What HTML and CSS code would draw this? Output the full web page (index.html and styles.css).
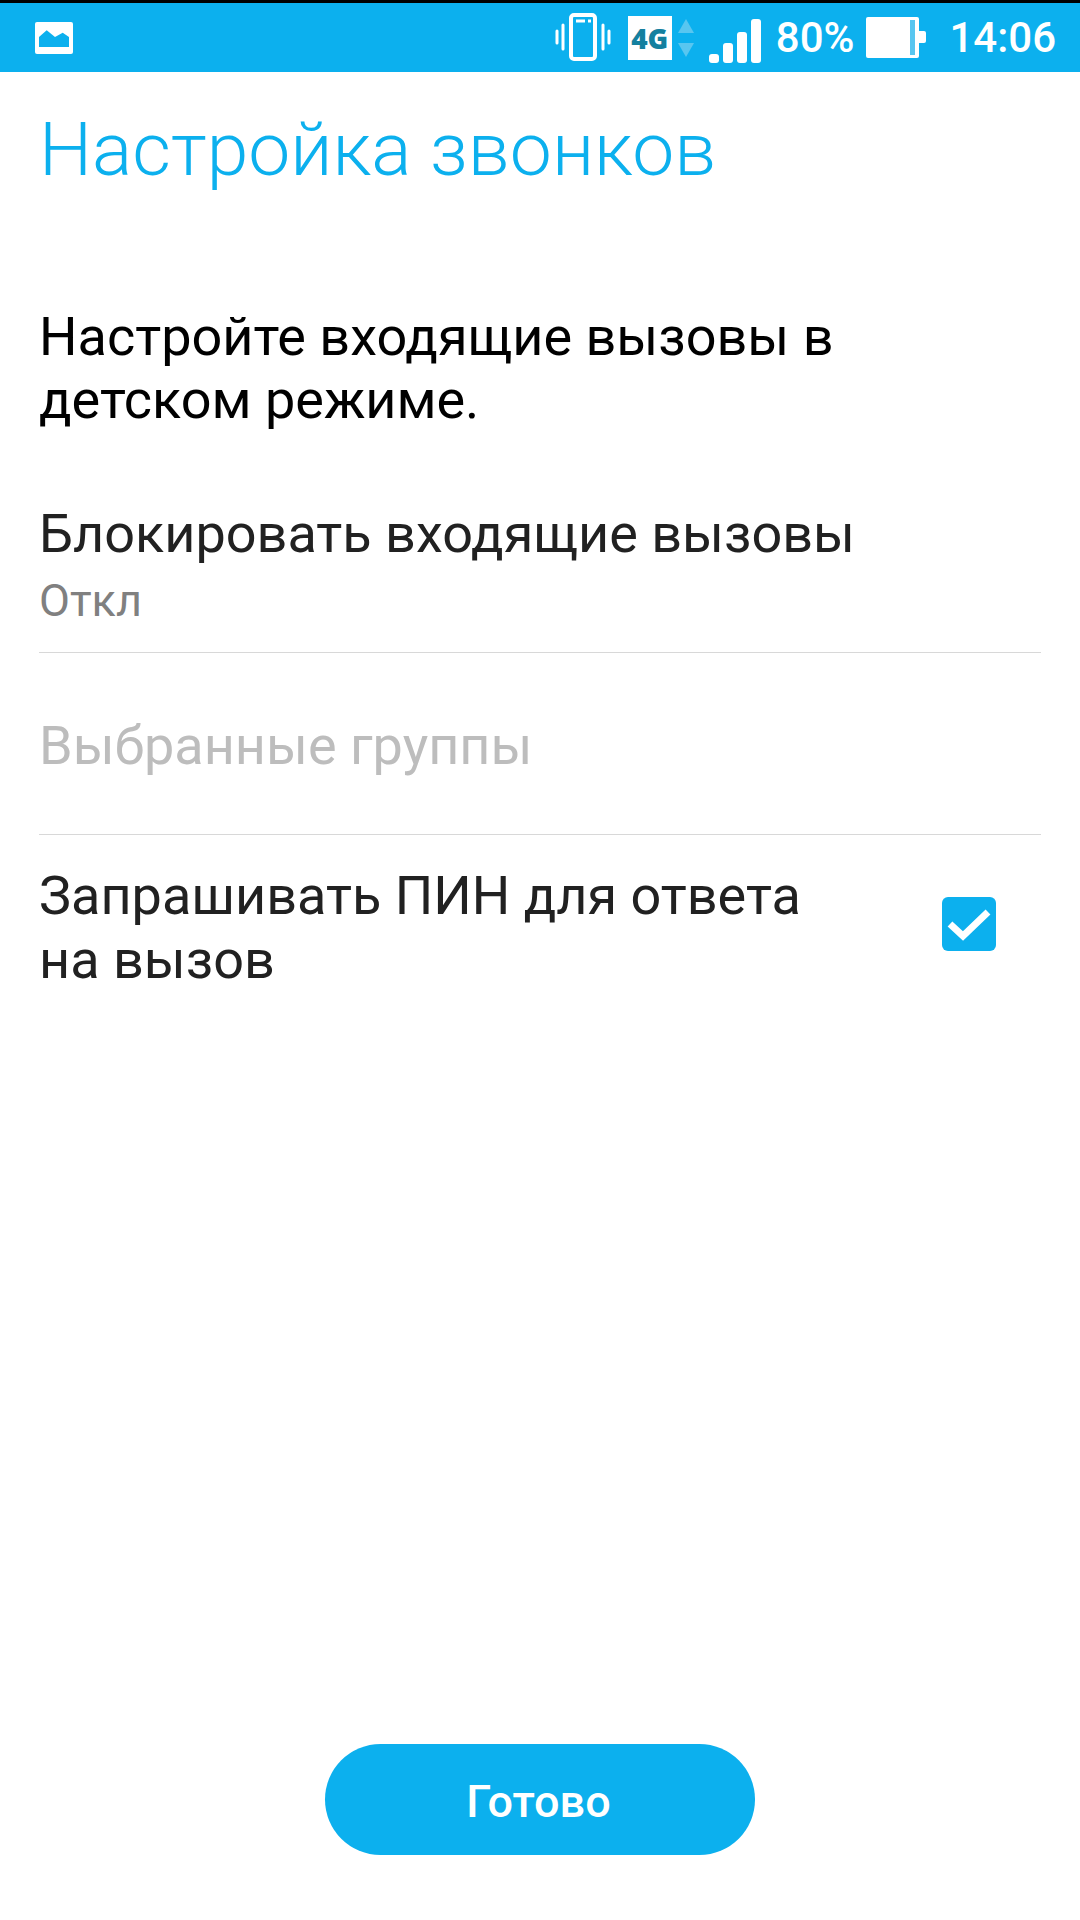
FILE: index.html
```html
<!DOCTYPE html>
<html lang="ru">
<head>
    <meta charset="UTF-8">
    <meta name="viewport" content="width=device-width, initial-scale=1.0">
    <title>Настройка звонков</title>
    <link rel="stylesheet" href="styles.css">
</head>
<body>
<div class="app">
    <header class="status-bar">
        <svg class="icon-picture" width="38" height="32" viewBox="0 0 38 32">
            <rect width="38" height="32" rx="2" fill="#fff"/>
            <path d="M4 25V15L11.7 8.3L20 15L27.7 10.7L34 15V25Z" fill="#0cb0ee"/>
        </svg>
        <div class="status-right">
            <svg class="icon-vibrate" width="56" height="48" viewBox="0 0 56 48">
                <rect x="16" y="2" width="24" height="44" rx="3" fill="none" stroke="#fff" stroke-width="4"/>
                <path d="M21 8H30M33 8H36" stroke="#fff" stroke-width="3"/>
                <path d="M8 12V36M2 18V30M48 12V36M54 18V30" stroke="#fff" stroke-width="3" stroke-linecap="round"/>
            </svg>
            <div class="net">
                <span class="net-badge">4G</span>
                <svg class="net-arrows" width="16" height="38" viewBox="0 0 16 38">
                    <path d="M8 0L16 14H0Z" fill="#58c6f0"/>
                    <path d="M8 38L16 24H0Z" fill="#58c6f0"/>
                </svg>
            </div>
            <svg class="icon-signal" width="52" height="44" viewBox="0 0 52 44">
                <rect x="0" y="35" width="10" height="9" rx="3" fill="#fff"/>
                <rect x="14" y="24" width="10" height="20" rx="3" fill="#fff"/>
                <rect x="28" y="13" width="10" height="31" rx="3" fill="#fff"/>
                <rect x="42" y="0" width="10" height="44" rx="3" fill="#fff"/>
            </svg>
            <span class="status-text battery-text">80%</span>
            <svg class="icon-battery" width="60" height="41" viewBox="0 0 60 41">
                <rect width="53" height="41" rx="2" fill="#fff"/>
                <rect x="44" y="3" width="5" height="35" fill="#58c6f0"/>
                <path d="M53 14H58a2 2 0 0 1 2 2V24a2 2 0 0 1-2 2H53Z" fill="#fff"/>
            </svg>
            <span class="status-text clock">14:06</span>
        </div>
    </header>

    <main class="content">
        <h1 class="page-title">Настройка звонков</h1>
        <p class="intro">Настройте входящие вызовы в детском режиме.</p>

        <div class="setting setting-block">
            <div class="setting-name">Блокировать входящие вызовы</div>
            <div class="setting-value">Откл</div>
        </div>
        <div class="setting setting-groups">
            <div class="setting-name disabled">Выбранные группы</div>
        </div>
        <div class="setting setting-pin">
            <div class="setting-name">Запрашивать ПИН для ответа на вызов</div>
            <svg class="checkbox" width="54" height="54" viewBox="0 0 54 54">
                <rect width="54" height="54" rx="6" fill="#0cb0ee"/>
                <path d="M8 27L21 39L46 15" fill="none" stroke="#fff" stroke-width="7"/>
            </svg>
        </div>
    </main>

    <footer class="actions">
        <button class="done-button">Готово</button>
    </footer>
</div>
</body>
</html>
```

FILE: styles.css
```css
:root {
    --primary: #0cb0ee;
}

* {
    box-sizing: border-box;
}

body {
    font-family: Roboto, sans-serif;
    margin: 0;
    padding: 0;
    background-color: #fff;
}

.app {
    width: 1080px;
    height: 1920px;
    display: flex;
    flex-direction: column;
}

.status-bar {
    height: 72px;
    background: var(--primary);
    border-top: 3px solid #000;
    display: flex;
    align-items: center;
    justify-content: space-between;
    padding: 0 24px 0 35px;
    flex-shrink: 0;
}

.status-right {
    display: flex;
    align-items: center;
}

.icon-vibrate {
    margin: 0 17px 2px 0;
}

.net {
    display: flex;
    align-items: center;
    gap: 6px;
    margin-right: 15px;
}

.net-badge {
    width: 44px;
    height: 44px;
    background: #fff;
    color: #14809f;
    font-family: "Open Sans", sans-serif;
    font-size: 28px;
    font-weight: 800;
    display: flex;
    align-items: center;
    justify-content: center;
}

.icon-signal {
    margin: 7px 15px 0 0;
}

.status-text {
    color: #fff;
    font-size: 42px;
    font-weight: 500;
}

.icon-battery {
    margin: 0 23px 0 12px;
}

.content {
    flex: 1;
    padding: 0 39px;
}

.page-title {
    margin: 0;
    padding-top: 35px;
    color: var(--primary);
    font-size: 75px;
    font-weight: 300;
    line-height: 84px;
}

.intro {
    margin: 114px 0 0;
    color: #000;
    font-size: 54px;
    line-height: 63px;
}

.setting {
    border-bottom: 1px solid #d8d8d8;
}

.setting-name {
    color: #212121;
    font-size: 54px;
    line-height: 64px;
}

.setting-name.disabled {
    color: #bdbdbd;
}

.setting-value {
    margin-top: 10px;
    color: #808080;
    font-size: 45px;
    line-height: 50px;
}

.setting-block {
    margin-top: 71px;
    height: 151px;
}

.setting-groups {
    height: 182px;
    padding-top: 61px;
}

.setting-pin {
    border-bottom: none;
    padding-top: 29px;
    display: flex;
    justify-content: space-between;
    align-items: flex-start;
}

.setting-pin .setting-name {
    width: 780px;
}

.checkbox {
    margin: 33px 45px 0 0;
    flex-shrink: 0;
}

.actions {
    display: flex;
    justify-content: center;
    padding-bottom: 65px;
}

.done-button {
    width: 430px;
    height: 111px;
    padding: 3px 3px 0 0;
    border: none;
    border-radius: 56px;
    background: var(--primary);
    color: #fff;
    font-family: Roboto, sans-serif;
    font-size: 45px;
    font-weight: 500;
}
```
